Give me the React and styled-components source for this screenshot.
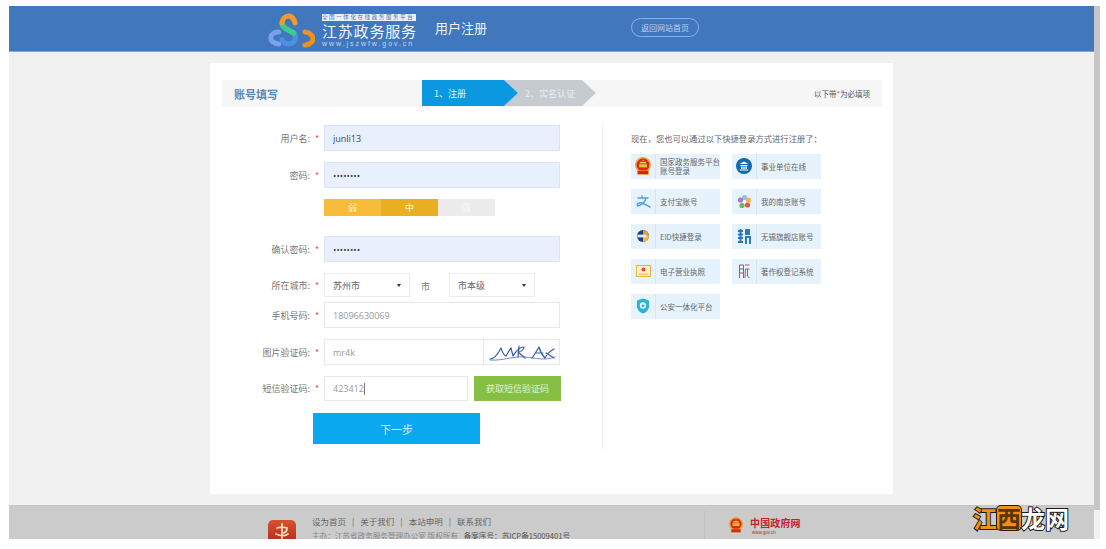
import React from 'react'
import styled, { createGlobalStyle } from 'styled-components'

const GlobalStyle = createGlobalStyle`
  html, body {
    margin: 0;
    padding: 0;
    background: #fff;
    overflow: hidden;
  }
  body {
    font-family: "Noto Sans CJK SC", "Open Sans", sans-serif;
    color: #666;
  }
`

const Page = styled.div`
  position: relative;
  width: 1106px;
  height: 549px;
  padding: 6px 6px 10px 9px;
  box-sizing: border-box;
  display: flex;
  overflow: hidden;
`

const Main = styled.div`
  flex: 1;
  background: #f1f1f1;
  overflow: hidden;
`

const ScrollTrack = styled.div`
  width: 6px;
  background: #f1f1f1;
`

const ScrollThumb = styled.div`
  height: 504px;
  background: #c6c6c6;
`

const Header = styled.header`
  height: 46px;
  background: #4077bd;
  border-bottom: 1px solid #7ba9dc;
  box-sizing: border-box;
  display: flex;
  align-items: center;
  padding-left: 256px;
`

const LogoText = styled.div`
  width: 94px;
  margin-left: 7px;
  align-self: flex-start;
  margin-top: 8px;
  display: flex;
  flex-direction: column;
  color: #fff;
`

const LogoBanner = styled.div`
  background: #e9f0f8;
  color: #4077bd;
  font-size: 5.5px;
  line-height: 7px;
  height: 7px;
  white-space: nowrap;
  letter-spacing: 1.6px;
  overflow: hidden;
`

const LogoName = styled.div`
  font-size: 15px;
  line-height: 19px;
  letter-spacing: .8px;
  white-space: nowrap;
  color: #f2f6fb;
`

const LogoUrl = styled.div`
  font-family: "Liberation Sans", sans-serif;
  font-size: 7px;
  line-height: 8px;
  letter-spacing: 1.95px;
  white-space: nowrap;
  color: #c5d8ee;
`

const PageTitle = styled.div`
  margin-left: 19px;
  font-size: 13px;
  color: #eef4fb;
  width: 196px;
  margin-top: -2px;
`

const BackLink = styled.a`
  width: 68px;
  height: 19px;
  margin-top: -2px;
  box-sizing: border-box;
  border: 1px solid #86b4ea;
  border-radius: 10px;
  color: #b9d3ef;
  font-size: 8px;
  display: flex;
  align-items: center;
  justify-content: center;
`

const Card = styled.section`
  width: 683px;
  height: 431px;
  margin: 11px 0 11px 201px;
  padding: 17px 11px 0 12px;
  box-sizing: border-box;
  background: #fff;
`

const TitleBar = styled.div`
  height: 27px;
  background: #f6f6f6;
  display: flex;
  align-items: center;
  padding-left: 12px;
`

const TitleText = styled.div`
  width: 188px;
  font-size: 11px;
  font-weight: 700;
  color: #5b86b8;
`

const Step = styled.div`
  position: relative;
  height: 26px;
  width: ${p => p.$width}px;
  padding-left: ${p => p.$pad}px;
  margin-top: -1px;
  box-sizing: border-box;
  display: flex;
  align-items: center;
  font-size: 9px;
  color: ${p => p.$active ? '#e3f3fc' : '#e9ecef'};
  background: ${p => p.$active ? '#0a99e0' : '#c6cbd0'};
  clip-path: polygon(0 0, calc(100% - 14px) 0, 100% 50%, calc(100% - 14px) 100%, 0 100%${p => p.$notch ? ', 14px 50%' : ''});
  margin-left: ${p => p.$notch ? '-14px' : '0'};
  z-index: ${p => p.$active ? 1 : 0};
`

const Required = styled.div`
  margin-left: auto;
  padding-right: 12px;
  font-size: 7.5px;
  color: #555;
  em {
    color: #e44;
    font-style: normal;
  }
`

const Body = styled.div`
  display: flex;
  margin-top: 18px;
`

const Form = styled.div`
  width: 380px;
  height: 325px;
  border-right: 1px solid #f2f2f2;
  flex-shrink: 0;
`

const Row = styled.div`
  display: flex;
  align-items: center;
  margin-bottom: ${p => p.$after ?? 11}px;
`

const Label = styled.label`
  width: 88px;
  text-align: right;
  font-size: 9px;
  color: #777;
  white-space: nowrap;
`

const Star = styled.span`
  width: 14px;
  text-align: center;
  font-size: 9px;
  color: #e0524d;
`

const Input = styled.input`
  width: ${p => p.$width ?? 236}px;
  height: ${p => p.$height ?? 26}px;
  box-sizing: border-box;
  padding: 0 8px;
  border: 1px solid ${p => p.$filled ? '#dce4f2' : '#e8e8e8'};
  background: ${p => p.$filled ? '#e8f0fe' : '#fff'};
  color: ${p => p.$filled ? '#444' : '#999'};
  font-family: "Open Sans", sans-serif;
  font-size: 9px;
  outline: none;
  border-radius: 0;
`

const Strength = styled.div`
  display: flex;
  margin-left: 102px;
  width: 171px;
  height: 17px;
  margin-bottom: 20px;
`

const StrengthCell = styled.div`
  flex: 1;
  background: ${p => p.$bg};
  color: ${p => p.$dim ? '#f7f7f7' : '#fff3d2'};
  font-size: 9px;
  line-height: 17px;
  text-align: center;
`

const Select = styled.div`
  width: 86px;
  height: 24px;
  box-sizing: border-box;
  padding: 0 8px;
  border: 1px solid #ececec;
  display: flex;
  align-items: center;
  justify-content: space-between;
  font-size: 9px;
  color: #666;
  &::after {
    content: "";
    border: 2px solid transparent;
    border-top: 3px solid #333;
    border-bottom: 0;
  }
`

const CityUnit = styled.span`
  width: 39px;
  box-sizing: border-box;
  padding-left: 11px;
  margin-top: 2px;
  font-size: 9px;
  color: #777;
`

const CaptchaField = styled.div`
  position: relative;
  width: 236px;
  height: 26px;
  display: flex;
`

const CaptchaImage = styled.div`
  position: absolute;
  top: 1px;
  right: 1px;
  width: 75px;
  height: 24px;
  border-left: 1px solid #e8e8e8;
  display: flex;
  align-items: center;
  justify-content: center;
`

const Caret = styled.span`
  position: absolute;
  left: 40px;
  top: 7px;
  width: 1px;
  height: 12px;
  background: #777;
`

const SmsField = styled.div`
  position: relative;
  display: flex;
`

const SmsButton = styled.button`
  width: 87px;
  height: 25px;
  margin-left: 6px;
  border: 0;
  padding: 0;
  background: #85c044;
  color: #e2f2cf;
  font-family: inherit;
  font-size: 9px;
`

const NextButton = styled.button`
  display: block;
  width: 167px;
  height: 31px;
  margin: 12px 0 0 91px;
  border: 0;
  padding: 0;
  background: #0aa9ef;
  color: #dff4fe;
  font-family: inherit;
  font-size: 11px;
`

const Quick = styled.div`
  padding-left: 28px;
  width: 190px;
  flex: 1;
`

const QuickTitle = styled.div`
  margin-top: 8px;
  font-size: 8.3px;
  line-height: 11px;
  color: #666;
  white-space: nowrap;
`

const QuickGrid = styled.div`
  margin-top: 10px;
  display: grid;
  grid-template-columns: 89px 89px;
  grid-auto-rows: 24.5px;
  column-gap: 12px;
  row-gap: 10.5px;
`

const QuickItem = styled.div`
  display: flex;
  align-items: center;
  background: #e6f2fc;
`

const QuickIcon = styled.div`
  width: 25px;
  height: 100%;
  flex-shrink: 0;
  border-right: 1px solid #d6e6f4;
  box-sizing: border-box;
  display: flex;
  align-items: center;
  justify-content: center;
`

const QuickText = styled.div`
  padding-left: 4px;
  font-size: 7.5px;
  line-height: 9px;
  color: #666;
  white-space: nowrap;
`

const Footer = styled.footer`
  height: 60px;
  background: #cbcbcb;
  display: flex;
  padding-top: 10px;
  box-sizing: border-box;
  border-top: 1px solid #c4c4c4;
`

const Badge = styled.div`
  width: 28px;
  height: 30px;
  margin: 4px 16px 0 259px;
  flex-shrink: 0;
  border-radius: 5px;
  background: linear-gradient(#d8512f, #a81f14);
  display: flex;
  align-items: flex-start;
  justify-content: center;
  padding-top: 3px;
  box-sizing: border-box;
`

const FooterText = styled.div`
  width: 392px;
  font-size: 7.6px;
  color: #666;
`

const FooterLinks = styled.div`
  font-size: 8.5px;
  line-height: 11px;
  color: #666;
  display: flex;
  gap: 6px;
`

const FooterMeta = styled.div`
  margin-top: 3px;
  line-height: 11px;
  white-space: nowrap;
  color: #888;
  b {
    margin-left: 4px;
    font-weight: 400;
    color: #555;
  }
`

const GovBlock = styled.div`
  border-left: 1px solid #c0c0c0;
  height: 40px;
  padding: 6px 0 0 24px;
  display: flex;
  margin-top: -5px;
`

const GovText = styled.div`
  margin-left: 7px;
  color: #c4232b;
`

const GovName = styled.div`
  font-size: 10px;
  font-weight: 700;
  line-height: 12px;
  letter-spacing: .15px;
  white-space: nowrap;
`

const GovUrl = styled.div`
  font-family: "Liberation Sans", sans-serif;
  font-size: 4.5px;
  line-height: 7px;
  margin-left: 2px;
`

const Watermark = styled.div`
  position: absolute;
  left: 973px;
  top: 503px;
  display: flex;
  font-family: "Noto Sans CJK SC", sans-serif;
  font-size: 24px;
  font-weight: 700;
  line-height: 30px;
  white-space: nowrap;
  color: #fff;
  -webkit-text-stroke: 2px #1c1c1c;
  paint-order: stroke fill;
`

const WatermarkAccent = styled.span`
  color: #f0920f;
`

const WatermarkBoxed = styled.span`
  height: 24px;
  margin-top: 3px;
  line-height: 24px;
  color: #5a3408;
  background: #ee9015;
  border-radius: 4px;
  box-shadow: 0 0 0 1px #2a1c08;
  -webkit-text-stroke: 0;
`

const Logo = () => (
  <svg width="50" height="38" viewBox="0 0 50 38" fill="none" strokeLinecap="round">
    <path d="M13.7 22 C4 22 2 33 13.7 34" stroke="#7c9ff0" strokeWidth="5" />
    <path d="M40 22 C50 23 51 34 40 35" stroke="#f0901e" strokeWidth="5" />
    <path d="M28.7 23 C33 28 29 34 23.7 34 C20 34 18 32 17 29.7" stroke="#4d8fe0" strokeWidth="5" />
    <path d="M17 13 C17 18 24 20 28.7 23" stroke="#3ecb8a" strokeWidth="5.5" />
    <path d="M30 13 C29 8 26 6 24 6 C20 6 17 9 17 13" stroke="#f29a2e" strokeWidth="5" />
  </svg>
)

const Captcha = () => (
  <svg width="70" height="22" viewBox="0 0 70 22" fill="none" stroke="#3a5ba8" strokeWidth="1.2" strokeLinecap="round" strokeLinejoin="round">
    <path d="M3 18 C8 18 11 13 14 7 C15 10 16 14 19 15 C21 12 22 9 24 7 L26 15 C29 10 32 6 37 6 C37 9 33 11 31 11 L38 17" />
    <path d="M32 5 L31 16" />
    <path d="M45 17 C48 13 50 9 52 6 C53 10 55 14 58 17 C60 13 63 10 67 8 M48 12 L56 12 M59 12 L67 17" />
    <path d="M3 19 C16 20 26 15 38 16 C48 17 58 20 68 16" strokeWidth=".7" />
  </svg>
)

const Emblem = ({ size = 16 }) => (
  <svg width={size} height={size * 1.15} viewBox="0 0 20 23">
    <circle cx="10" cy="10" r="9" fill="#d9281e" />
    <circle cx="10" cy="10" r="9" fill="none" stroke="#eea63a" strokeWidth="2" />
    <rect x="6" y="6" width="8" height="2" fill="#f6cf4a" />
    <path d="M10 3 L11 5 L9 5 Z" fill="#f6cf4a" />
    <rect x="5" y="9" width="10" height="4" fill="#f2b93a" />
    <rect x="3" y="17" width="14" height="5" rx="1" fill="#c92a1e" stroke="#eeb23a" strokeWidth=".8" />
  </svg>
)

const BadgeMark = () => (
  <svg width="16" height="18" viewBox="0 0 16 18" fill="none" stroke="#f6dcb4" strokeWidth="1.8" strokeLinecap="round">
    <path d="M8 1 V17 M3 5 C6 4 10 4 13 5 C13 8 12 10 8 10 M2 11 C6 13 11 13 14 11" />
  </svg>
)

const quickIcons = {
  gov: <Emblem size={16} />,
  unit: (
    <svg width="16" height="16" viewBox="0 0 16 16">
      <circle cx="8" cy="8" r="8" fill="#1668ad" />
      <path d="M8 3.5 L12.5 6 H3.5 Z M4.5 7 H11.5 V8 H4.5 Z M5 8.5 H6.5 V11 H5 Z M7.3 8.5 H8.7 V11 H7.3 Z M9.5 8.5 H11 V11 H9.5 Z M3.8 11.5 H12.2 V12.6 H3.8 Z" fill="#fff" />
    </svg>
  ),
  alipay: (
    <svg width="15" height="13" viewBox="0 0 15 13" fill="none" stroke="#4aa3df" strokeWidth="1.4" strokeLinecap="round">
      <path d="M2 3 H12 M6 1 V3 M10 3 C9 7 6 10 1.5 11 C0.5 9 3 7 6 8 C9 9 11 10.5 14 12" />
    </svg>
  ),
  nanjing: (
    <svg width="15" height="15" viewBox="0 0 15 15">
      <circle cx="7.5" cy="3.5" r="2.6" fill="#8fc3ea" />
      <circle cx="11.5" cy="6" r="2.6" fill="#f2b54a" />
      <circle cx="10.5" cy="11" r="2.6" fill="#e0584c" />
      <circle cx="5" cy="11.5" r="2.6" fill="#6fb55c" />
      <circle cx="3.5" cy="6" r="2.6" fill="#a67cc4" />
      <circle cx="7.5" cy="7.5" r="1.6" fill="#fff" />
    </svg>
  ),
  eid: (
    <svg width="14" height="12" viewBox="0 0 14 12">
      <circle cx="7" cy="6" r="6" fill="#17427f" />
      <path d="M7 0 A6 6 0 0 1 13 6 H7 Z" fill="#e8a02c" />
      <path d="M7 12 A6 6 0 0 0 13 6 H7 Z" fill="#f0b84a" />
      <rect x="1.5" y="4.6" width="9" height="2.8" fill="#dfe9f5" />
    </svg>
  ),
  wuxi: (
    <svg width="13" height="15" viewBox="0 0 13 15" fill="#2a7cc0">
      <path d="M0 1 H5 V3 H0 Z M0 4.5 H5 V6.5 H0 Z M0 8 H5 V10 H0 Z M1.5 0 H3.5 V14 H1.5 Z M0 12 H5 V14 H0 Z" />
      <path d="M7 0 H12 V6 H7 Z M7 7 H13 V9 H7 Z M7 7 H9 V15 H7 Z M11 7 H13 V15 H11 Z" />
    </svg>
  ),
  license: (
    <svg width="15" height="12" viewBox="0 0 15 12">
      <rect x=".5" y=".5" width="14" height="11" fill="#fdf0c4" stroke="#efb43f" />
      <rect x="3" y="8.5" width="9" height="1.5" fill="#f3c870" />
      <circle cx="7.5" cy="4.5" r="2" fill="#dd4a38" />
    </svg>
  ),
  copyright: (
    <svg width="11" height="15" viewBox="0 0 11 15" fill="none" stroke="#a9566b" strokeWidth="1">
      <path d="M.5 1 H4.5 V14 M.5 1 V14 M.5 5 H4.5 M.5 9 H4.5 M6 1 H10.5 M6.5 5 H10.5 M6.5 5 L6 14 M8.5 5 V12 L10.5 14" />
    </svg>
  ),
  police: (
    <svg width="14" height="16" viewBox="0 0 14 16">
      <path d="M7 0.5 L13 2.5 V8 C13 12 10 14.5 7 15.5 C4 14.5 1 12 1 8 V2.5 Z" fill="#29b2d6" />
      <circle cx="7" cy="7.5" r="3.2" fill="#e6f6fb" />
      <path d="M7 5.6 L7.6 7 L9 7.2 L8 8.1 L8.2 9.4 L7 8.8 L5.8 9.4 L6 8.1 L5 7.2 L6.4 7 Z" fill="#29b2d6" />
    </svg>
  ),
}

const quickLinks = [
  { icon: 'gov', lines: ['国家政务服务平台', '账号登录'] },
  { icon: 'unit', lines: ['事业单位在线'] },
  { icon: 'alipay', lines: ['支付宝账号'] },
  { icon: 'nanjing', lines: ['我的南京账号'] },
  { icon: 'eid', lines: ['EID快捷登录'] },
  { icon: 'wuxi', lines: ['无锡旗舰店账号'] },
  { icon: 'license', lines: ['电子营业执照'] },
  { icon: 'copyright', lines: ['著作权登记系统'] },
  { icon: 'police', lines: ['公安一体化平台'] },
]

function Field({ label, after, children }) {
  return (
    <Row $after={after}>
      <Label>{label}:</Label>
      <Star>*</Star>
      {children}
    </Row>
  )
}

export default function App() {
  return (
    <>
      <GlobalStyle />
      <Page>
        <Main>
          <Header>
            <Logo />
            <LogoText>
              <LogoBanner>全国一体化在线政务服务平台</LogoBanner>
              <LogoName>江苏政务服务</LogoName>
              <LogoUrl>www.jszwfw.gov.cn</LogoUrl>
            </LogoText>
            <PageTitle>用户注册</PageTitle>
            <BackLink>返回网站首页</BackLink>
          </Header>

          <Card>
            <TitleBar>
              <TitleText>账号填写</TitleText>
              <Step $active $width={96} $pad={12}>1、注册</Step>
              <Step $notch $width={92} $pad={21}>2、实名认证</Step>
              <Required>以下带<em>*</em>为必填项</Required>
            </TitleBar>

            <Body>
              <Form>
                <Field label="用户名">
                  <Input $filled readOnly value="junli13" />
                </Field>
                <Field label="密码">
                  <Input $filled readOnly type="password" value="junli135" />
                </Field>
                <Strength>
                  <StrengthCell $bg="#f6bc3a">弱</StrengthCell>
                  <StrengthCell $bg="#e9ae22">中</StrengthCell>
                  <StrengthCell $bg="#ececec" $dim>强</StrengthCell>
                </Strength>
                <Field label="确认密码">
                  <Input $filled readOnly type="password" value="junli135" />
                </Field>
                <Field label="所在城市" after={5}>
                  <Select>苏州市</Select>
                  <CityUnit>市</CityUnit>
                  <Select>市本级</Select>
                </Field>
                <Field label="手机号码">
                  <Input readOnly value="18096630069" />
                </Field>
                <Field label="图片验证码">
                  <CaptchaField>
                    <Input readOnly value="mr4k" />
                    <CaptchaImage><Captcha /></CaptchaImage>
                  </CaptchaField>
                </Field>
                <Field label="短信验证码" after={0}>
                  <SmsField>
                    <Input $width={144} $height={25} readOnly value="423412" />
                    <Caret />
                  </SmsField>
                  <SmsButton>获取短信验证码</SmsButton>
                </Field>
                <NextButton>下一步</NextButton>
              </Form>

              <Quick>
                <QuickTitle>{'现在\uFF0C您也可以通过以下快捷登录方式进行注册了\uFF1A'}</QuickTitle>
                <QuickGrid>
                  {quickLinks.map(item => (
                    <QuickItem key={item.icon}>
                      <QuickIcon>{quickIcons[item.icon]}</QuickIcon>
                      <QuickText>
                        {item.lines.map(line => <div key={line}>{line}</div>)}
                      </QuickText>
                    </QuickItem>
                  ))}
                </QuickGrid>
              </Quick>
            </Body>
          </Card>

          <Footer>
            <Badge><BadgeMark /></Badge>
            <FooterText>
              <FooterLinks>
                <span>设为首页</span><span>|</span>
                <span>关于我们</span><span>|</span>
                <span>本站申明</span><span>|</span>
                <span>联系我们</span>
              </FooterLinks>
              <FooterMeta>
                {'主办\uFF1A江苏省政务服务管理办公室 版权所有 '}<b>{'备案序号\uFF1A苏ICP备15009401号'}</b>
              </FooterMeta>
            </FooterText>
            <GovBlock>
              <Emblem size={14} />
              <GovText>
                <GovName>中国政府网</GovName>
                <GovUrl>www.gov.cn</GovUrl>
              </GovText>
            </GovBlock>
          </Footer>
        </Main>
        <ScrollTrack><ScrollThumb /></ScrollTrack>
        <Watermark>
          <WatermarkAccent>江</WatermarkAccent>
          <WatermarkBoxed>西</WatermarkBoxed>
          <span>龙网</span>
        </Watermark>
      </Page>
    </>
  )
}
